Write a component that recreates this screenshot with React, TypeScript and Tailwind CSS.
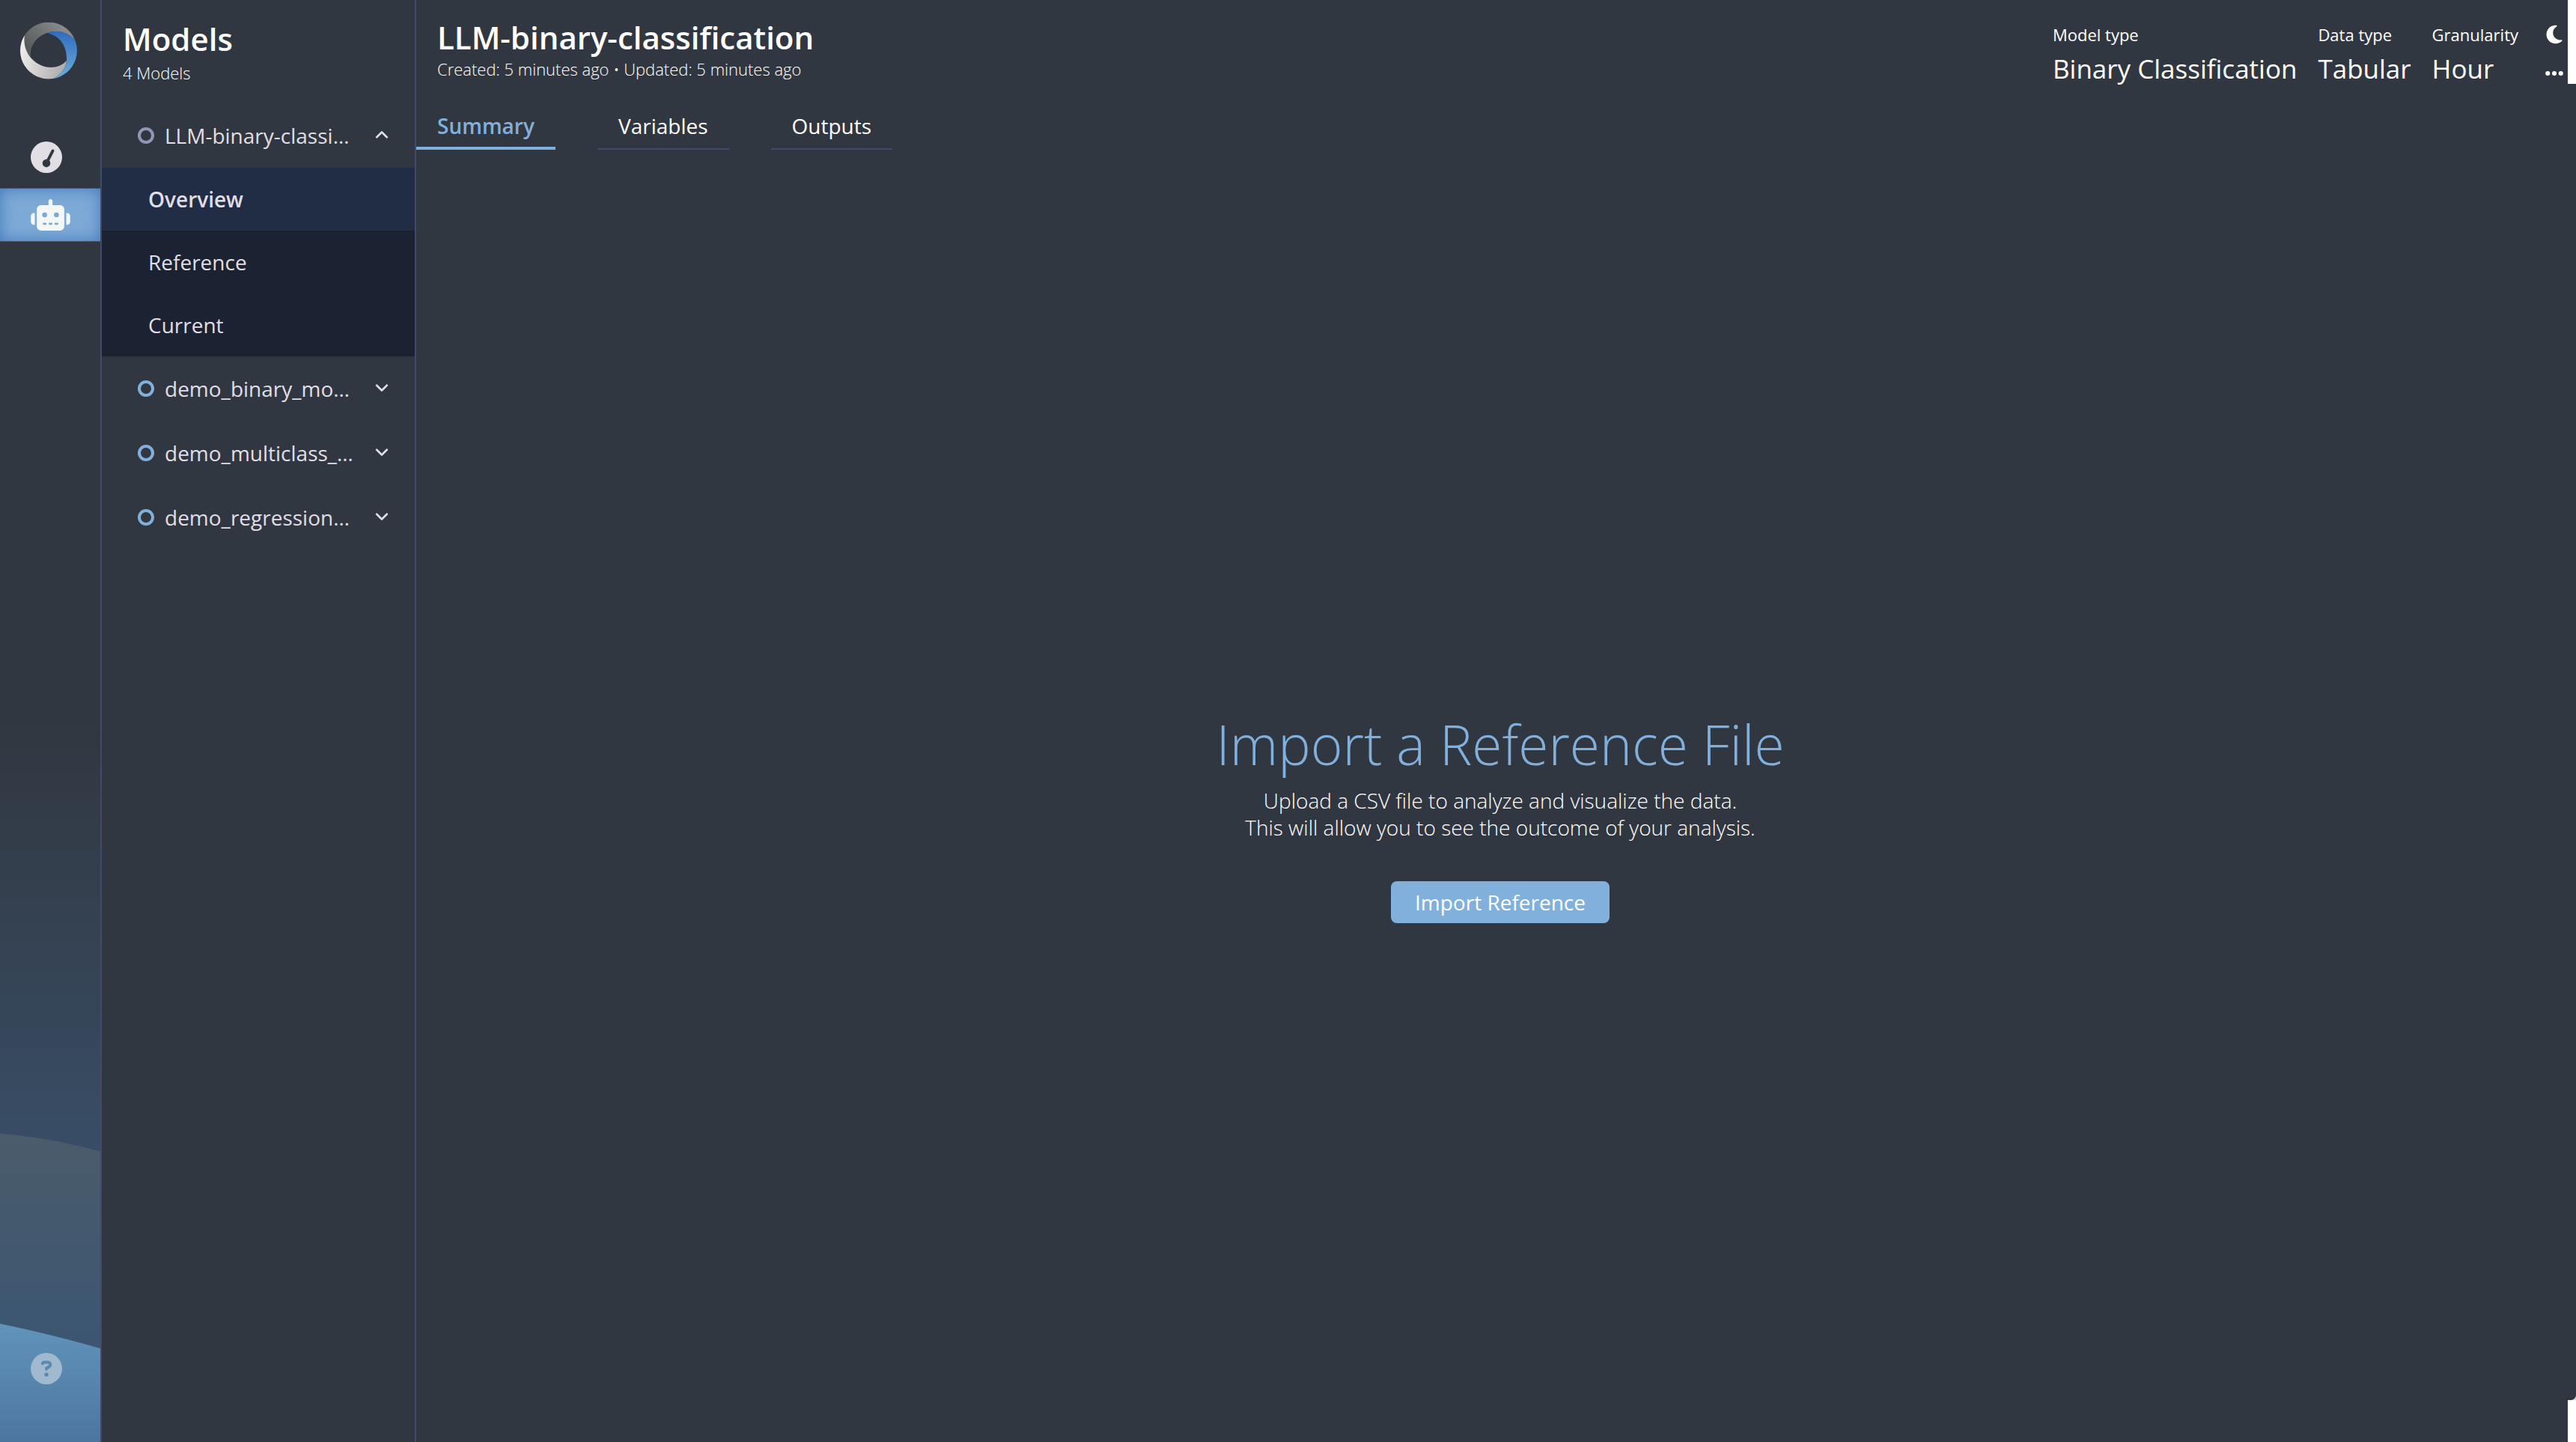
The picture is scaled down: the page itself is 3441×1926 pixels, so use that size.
import type { ReactNode } from 'react';
import {
  FaChevronDown,
  FaChevronUp,
  FaCircleQuestion,
  FaEllipsis,
  FaGaugeSimpleHigh,
  FaMoon,
  FaRobot,
} from 'react-icons/fa6';

function Logo() {
  return (
    <svg viewBox="0 0 76 76" className="h-[76px] w-[76px]" aria-hidden="true">
      <defs>
        <linearGradient id="ring-grey" x1="0" y1="0.6" x2="1" y2="0">
          <stop offset="0" stopColor="#585b5b" />
          <stop offset="1" stopColor="#97999c" />
        </linearGradient>
        <linearGradient id="ring-white" x1="0" y1="0" x2="1" y2="0.3">
          <stop offset="0" stopColor="#f4f4f4" />
          <stop offset="1" stopColor="#b4b2b0" />
        </linearGradient>
        <linearGradient id="ring-blue" x1="0" y1="0" x2="0" y2="1">
          <stop offset="0" stopColor="#2f6cbf" />
          <stop offset="1" stopColor="#6fadd8" />
        </linearGradient>
      </defs>
      <path d="M6 17A38 38 0 0 1 73 23C64 14 52 9 36 14C24 18 12 29 14 47C8 40 4 29 6 17Z" fill="url(#ring-grey)" />
      <path d="M6 17A38 38 0 0 0 44 75C54 70 61 61 62 51C50 64 28 63 14 47C8 40 4 29 6 17Z" fill="url(#ring-white)" />
      <path d="M36 14C52 9 64 14 73 23A38 38 0 0 1 44 75C54 70 61 61 62 51C63 33 54 18 36 14Z" fill="url(#ring-blue)" />
    </svg>
  );
}

function RailBackdrop() {
  return (
    <svg
      viewBox="0 0 134 412"
      preserveAspectRatio="none"
      className="absolute bottom-0 left-0 h-[412px] w-full"
      aria-hidden="true"
    >
      <defs>
        <linearGradient id="hill-back" x1="0" y1="0" x2="0" y2="1">
          <stop offset="0" stopColor="#4b5c6b" />
          <stop offset="0.65" stopColor="#3c5672" />
          <stop offset="1" stopColor="#3b5575" />
        </linearGradient>
        <linearGradient id="hill-front" x1="0" y1="0" x2="0" y2="1">
          <stop offset="0" stopColor="#6193bb" />
          <stop offset="1" stopColor="#4d769f" />
        </linearGradient>
      </defs>
      <path d="M0 0Q70 6 134 24V412H0Z" fill="url(#hill-back)" />
      <path d="M0 254Q60 266 134 287V412H0Z" fill="url(#hill-front)" />
    </svg>
  );
}

function Rail() {
  return (
    <nav
      aria-label="Sections"
      className="relative flex w-[136px] shrink-0 flex-col border-r-2 border-[#43496a] bg-linear-to-b from-[#313740] from-50% to-[#3a5573] to-90%"
    >
      <RailBackdrop />
      <a href="#home" aria-label="Home" className="mt-[30px] ml-[27px] self-start">
        <Logo />
      </a>
      <a href="#dashboard" aria-label="Dashboard" className="mt-[62px] flex h-[83px] items-center pl-[41px] text-[#e1dee6]">
        <FaGaugeSimpleHigh className="h-[42px] w-[42px]" />
      </a>
      <a
        href="#models"
        aria-label="Models"
        aria-current="page"
        className="flex h-[72px] items-center border-y border-[#4a5260] bg-[#7da9d6] pl-[41px] text-[#f4f7f7] shadow-[inset_0_0_20px_#4379bb]"
      >
        <FaRobot className="h-[42px] w-[53px]" />
      </a>
      <button type="button" aria-label="Help" className="relative mt-auto mb-[77px] ml-[41px] self-start text-[#a0b9cf]">
        <FaCircleQuestion className="h-[42px] w-[42px]" />
      </button>
    </nav>
  );
}

type ModelRowProps = { name: string; open?: boolean };

function ModelRow({ name, open = false }: ModelRowProps) {
  return (
    <button type="button" aria-expanded={open} className="flex h-[86px] w-full items-center pr-[35px] pl-12 text-left">
      <span
        className={
          open
            ? 'h-[22px] w-[22px] shrink-0 rounded-full border-4 border-[#9097b4]'
            : 'h-[22px] w-[22px] shrink-0 rounded-full border-4 border-[#82b0dd]'
        }
      />
      <span className="ml-[14px] w-[254px] truncate">{name}</span>
      {open ? (
        <FaChevronUp className="ml-auto h-[18px] w-[18px] overflow-visible stroke-current stroke-[20px]" />
      ) : (
        <FaChevronDown className="mb-1 ml-auto h-[18px] w-[18px] overflow-visible stroke-current stroke-[20px]" />
      )}
    </button>
  );
}

function Sidebar() {
  return (
    <aside className="w-[420px] shrink-0 border-r-2 border-[#43496a] text-[28px] text-[#e1dee6]">
      <header className="h-[138px] pt-[22px] pl-7 text-white">
        <h2 className="text-[42px] leading-[60px] font-semibold">Models</h2>
        <p className="text-[22px] leading-[30px] font-light">4 Models</p>
      </header>
      <ModelRow name="LLM-binary-classification" open />
      <ul className="bg-[#1b2333]">
        <li>
          <a href="#overview" aria-current="page" className="flex h-[84px] items-center bg-[#202d45] pl-[62px] font-semibold">
            Overview
          </a>
        </li>
        <li>
          <a href="#reference" className="flex h-[84px] items-center pl-[62px]">
            Reference
          </a>
        </li>
        <li>
          <a href="#current" className="flex h-[84px] items-center pl-[62px]">
            Current
          </a>
        </li>
      </ul>
      <ModelRow name="demo_binary_model" />
      <ModelRow name="demo_multiclass_model" />
      <ModelRow name="demo_regression_model" />
    </aside>
  );
}

function Fact({ label, children }: { label: string; children: ReactNode }) {
  return (
    <div>
      <dt className="text-[22px] leading-[36px]">{label}</dt>
      <dd className="text-[35px] leading-[56px]">{children}</dd>
    </div>
  );
}

function Header() {
  return (
    <header className="flex h-[140px] items-start pt-[22px] pl-7">
      <div>
        <h1 className="text-[42px] leading-[56px] font-semibold">LLM-binary-classification</h1>
        <p className="text-[22px] leading-[28px] font-light">Created: 5 minutes ago • Updated: 5 minutes ago</p>
      </div>
      <dl className="mt-[6px] ml-auto flex gap-7">
        <Fact label="Model type">Binary Classification</Fact>
        <Fact label="Data type">Tabular</Fact>
        <Fact label="Granularity">Hour</Fact>
      </dl>
      <div className="mt-[10px] mr-[15px] ml-[34px] flex flex-col gap-6">
        <button type="button" aria-label="Dark theme">
          <FaMoon className="h-7 w-7" />
        </button>
        <button type="button" aria-label="More actions">
          <FaEllipsis className="h-7 w-7" />
        </button>
      </div>
    </header>
  );
}

function Tabs() {
  return (
    <div role="tablist" className="flex gap-14 text-[28px] leading-[40px]">
      <button type="button" role="tab" aria-selected="true" className="h-15 border-b-4 border-[#82b0dd] px-7 font-semibold text-[#82b0dd]">
        Summary
      </button>
      <button type="button" role="tab" aria-selected="false" className="h-15 border-b-2 border-[#43496a] px-7 pb-0.5">
        Variables
      </button>
      <button type="button" role="tab" aria-selected="false" className="h-15 border-b-2 border-[#43496a] px-7 pb-0.5">
        Outputs
      </button>
    </div>
  );
}

export default function App() {
  return (
    <div className="relative flex min-h-screen bg-[#313740] font-['Open_Sans',sans-serif] text-white">
      <Rail />
      <Sidebar />
      <main className="flex min-w-0 flex-1 flex-col">
        <Header />
        <Tabs />
        <section className="flex flex-1 flex-col items-center justify-center pt-[52px] pl-[11px] text-center">
          <h2 className="mb-2 text-[73px] leading-[98px] font-light text-[#82b0dd]">Import a Reference File</h2>
          <p className="text-[28px] leading-[36px] font-light">
            Upload a CSV file to analyze and visualize the data.
            <br />
            This will allow you to see the outcome of your analysis.
          </p>
          <button type="button" className="mt-[54px] h-14 rounded-lg bg-[#82b0dd] px-8 text-[28px] leading-[40px]">
            Import Reference
          </button>
        </section>
      </main>
      <span className="absolute top-0 right-0 h-28 w-[11px] bg-white" />
      <div className="absolute right-0 bottom-0 flex flex-col items-end">
        <svg viewBox="0 0 6 6" className="h-1.5 w-1.5 fill-[#d5d5d5]" aria-hidden="true">
          <path d="M6 0V6H0Q5 5 6 0Z" />
        </svg>
        <span className="h-14 w-[11px] bg-white" />
      </div>
    </div>
  );
}
